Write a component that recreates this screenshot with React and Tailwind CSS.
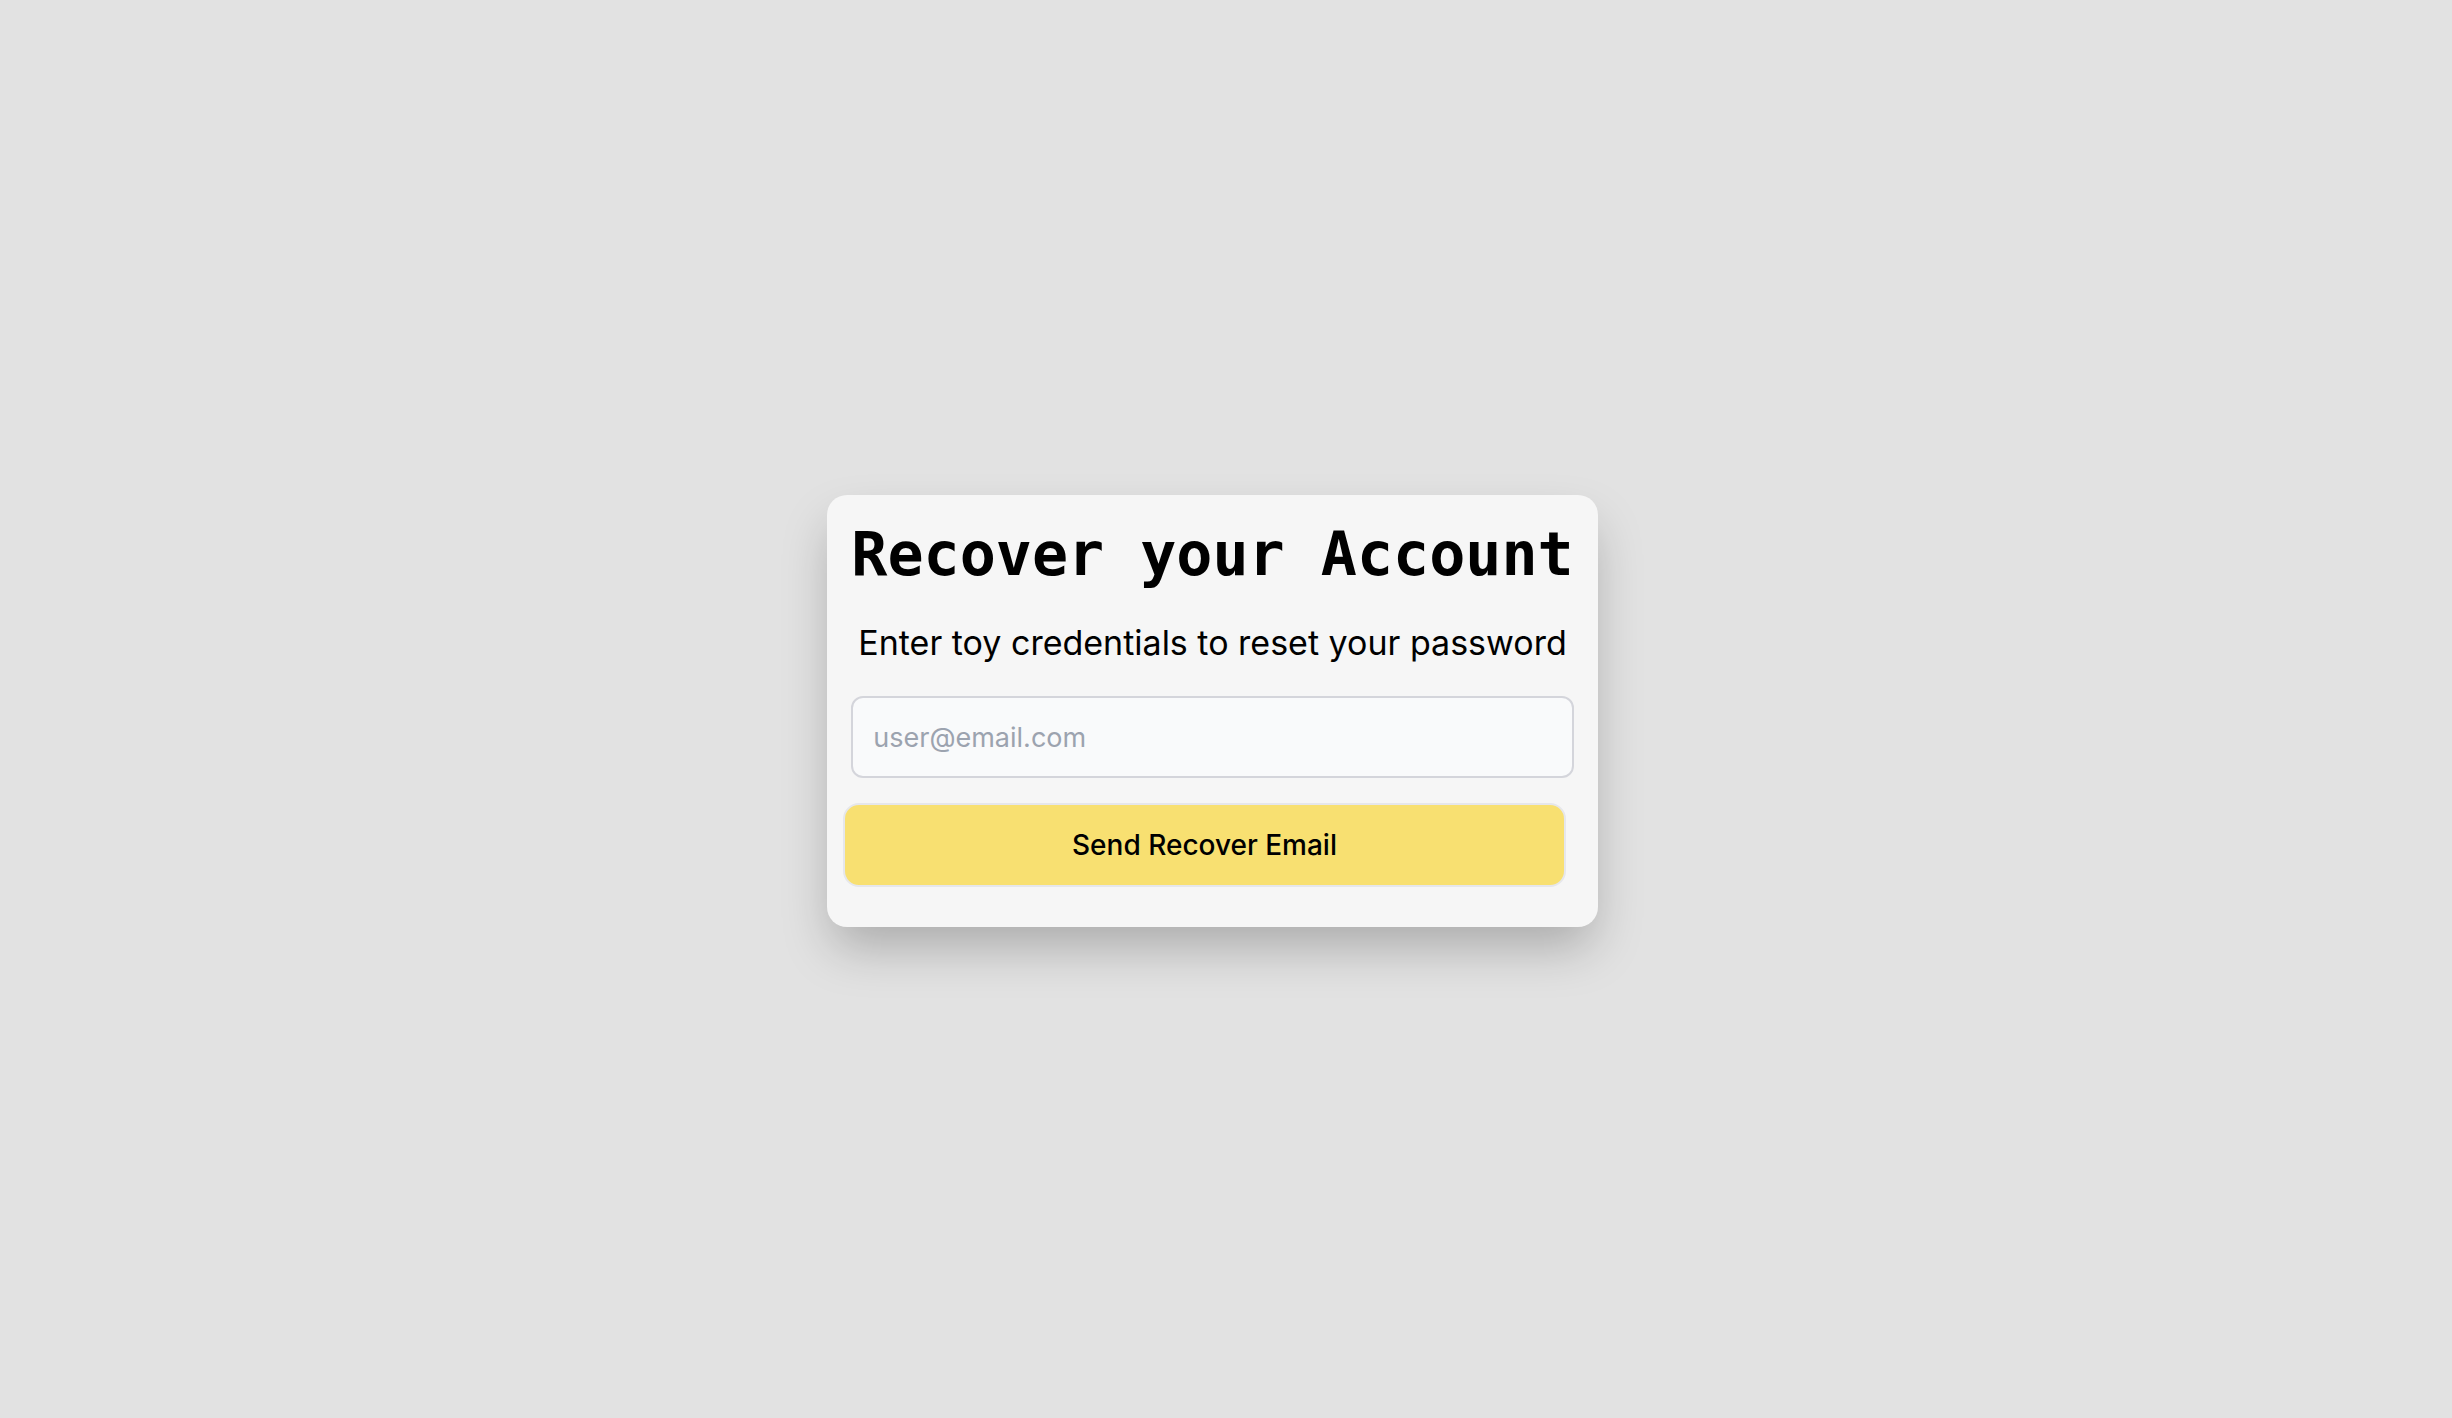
import React from "react";

export default function App() {
  return (
    <div className="min-h-screen w-full bg-[#e2e2e2] flex items-center justify-center pr-[27px]">
      <div className="mt-1 bg-[#f6f6f6] rounded-[20px] px-6 pt-6 pb-10 shadow-[0_25px_50px_-6px_rgba(0,0,0,0.25)] flex flex-col items-stretch">
        {/* Heading */}
        <h1 className="font-['DejaVu_Sans_Mono',monospace] font-bold text-[60px] leading-[70px] text-black whitespace-nowrap">
          Recover your Account
        </h1>
        <p className="mt-[34px] font-['Inter',sans-serif] text-[34px] leading-[40px] text-black text-center whitespace-nowrap">
          Enter toy credentials to reset your password
        </p>

        <input
          type="email"
          placeholder="user@email.com"
          className="mt-[33px] w-full h-[82px] rounded-xl border-2 border-[#d4d5db] bg-[#f9fafb] px-5 font-['Inter',sans-serif] text-[27px] text-black placeholder:text-[#9ca3af] outline-none"
        />

        <button className="mt-[25px] -ml-2 w-full h-[84px] rounded-2xl border-2 border-[#e6e7eb] bg-[#f8e071] font-['Inter',sans-serif] font-medium text-[28px] text-black">
          Send Recover Email
        </button>
      </div>
    </div>
  );
}
